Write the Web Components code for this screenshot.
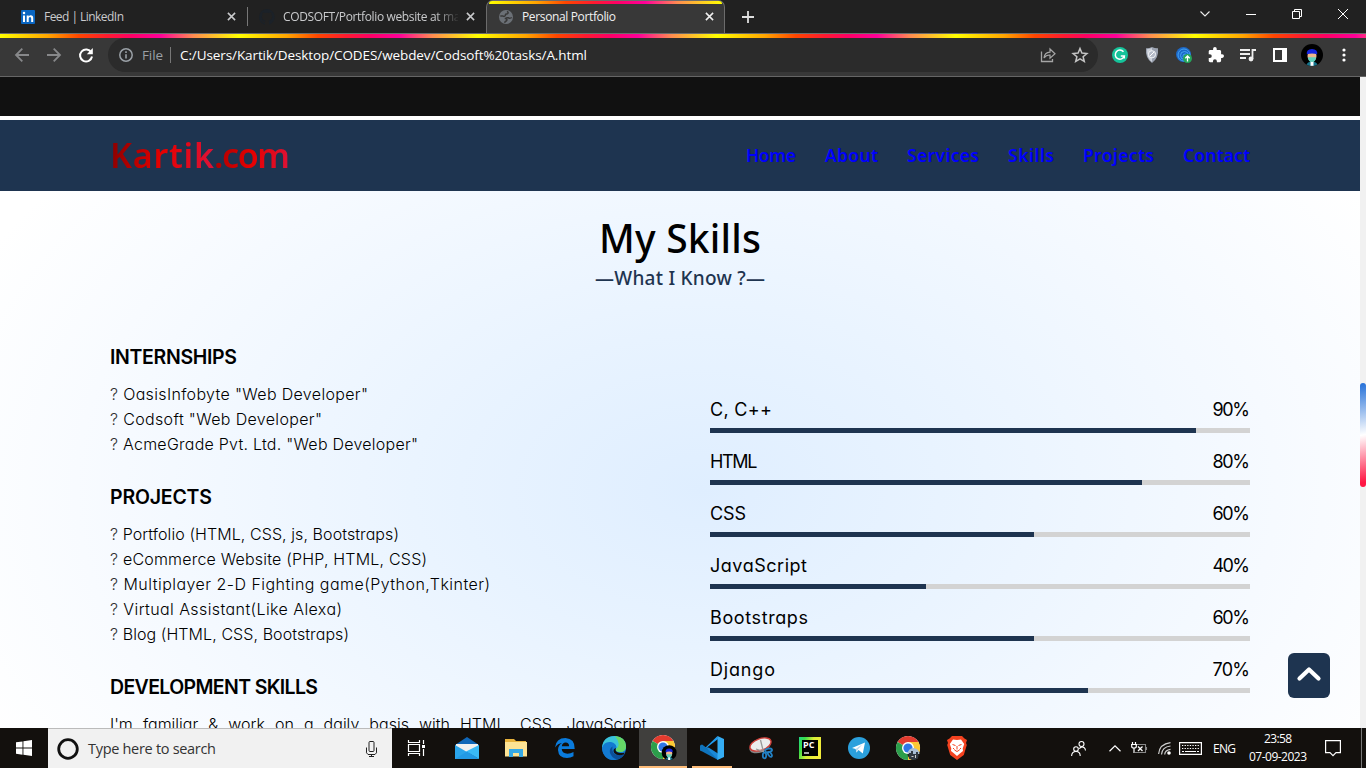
<!DOCTYPE html>
<html lang="en">
<head>
<meta charset="utf-8">
<title>Personal Portfolio</title>
<style>
html,body{margin:0;height:100%;overflow:hidden}
body{font-family:"Open Sans","Noto Sans",sans-serif;background:#fff}
</style>
</head>
<body>
<desktop-screen></desktop-screen>
<script>
const define = (name, html) => {
  const t = document.createElement('template');
  t.innerHTML = html;
  customElements.define(name, class extends HTMLElement {
    constructor() {
      super();
      this.attachShadow({ mode: 'open' }).appendChild(t.content.cloneNode(true));
    }
  });
};

/* ---------- icon set ---------- */
const avatar = '<circle cx="12" cy="12" r="11" fill="#000"/><path d="M6.500 21.500q1.500-3 5.500-3t5.500 3q-5.500 3-11 0z" fill="#16748c"/><path d="M10.500 18h3v4.800h-3z" fill="#fff"/><ellipse cx="12" cy="13" rx="4.500" ry="5.500" fill="#efb58c"/><path d="M8 14.300h8q0 4.700-4 4.700t-4-4.700z" fill="#5fd0bd"/><path d="M6.800 11.300Q6 6.500 12 6q6 .500 5.200 5.300-5.200-1.800-10.400 0z" fill="#1424e0"/>';
const chrome = '<circle cx="12" cy="12" r="12" fill="#fff"/><path d="M12 12L1.600 6A12 12 0 0 1 22.400 6z" fill="#e33b2e"/><path d="M12 12L22.400 6A12 12 0 0 1 12 24z" fill="#fcc934"/><path d="M12 12v12A12 12 0 0 1 1.600 6z" fill="#2c9e4b"/><path d="M12 6h10.400l-5.200 9z" fill="#fcc934"/><path d="M12 24l5.200-9L12 12z" fill="#fcc934"/><circle cx="12" cy="12" r="6" fill="#fff"/><circle cx="12" cy="12" r="4.600" fill="#2f76e6"/>';
const X = '<path d="M1 1l8 8M9 1l-8 8" stroke="currentColor" stroke-width="1.700" fill="none"/>';
const ICONS = {
  linkedin: ['0 0 14 14', '<rect width="14" height="14" rx="1" fill="#0a66c2"/><rect x="2" y="5.500" width="2" height="6.500" fill="#fff"/><circle cx="3" cy="3" r="1.250" fill="#fff"/><path d="M5.700 12V5.500h2v1Q8.500 5.300 9.800 5.300 12.200 5.300 12.200 8v4h-2V8.600q0-1.500-1.200-1.500T7.700 8.600V12z" fill="#fff"/>'],
  github: ['0 0 16 16', '<path fill="#1b2128" d="M8 0a8 8 0 0 0-2.500 15.600c.4.100.5-.2.500-.4v-1.500c-2.200.5-2.700-1-2.700-1-.4-.9-.9-1.200-.9-1.200-.7-.5.100-.5.100-.5.800.1 1.200.8 1.200.8.700 1.200 1.900.9 2.300.7.100-.5.300-.9.500-1.100-1.800-.2-3.600-.9-3.600-4 0-.9.300-1.600.8-2.100-.1-.2-.4-1 .1-2.100 0 0 .7-.2 2.200.8a7.500 7.500 0 0 1 4 0c1.500-1 2.200-.8 2.200-.8.400 1.100.2 1.900.1 2.100.5.600.8 1.300.8 2.100 0 3.100-1.900 3.800-3.700 4 .3.200.6.700.6 1.500v2.200c0 .2.100.5.500.4A8 8 0 0 0 8 0z"/>'],
  globe: ['0 0 14 14', '<circle cx="7" cy="7" r="7" fill="#6b7076"/><path d="M8 1.300Q10 2.500 8.500 3.800 6.300 3.800 6.300 5.500 5.500 7 4 6L1.300 6M12.800 7.500Q11 8.700 9.500 7.800 7 7.500 6.500 8.500 8.800 9.300 7.500 10.800 6 11.500 5.500 12.800" stroke="#383838" stroke-width="1.500" fill="none"/>'],
  x: ['0 0 10 10', X],
  xthin: ['0 0 10 10', '<path d="M0 0l10 10M10 0L0 10" stroke="#fff" fill="none"/>'],
  plus: ['0 0 12 12', '<path d="M6 0v12M0 6h12" stroke="#dedede" stroke-width="1.800"/>'],
  chev: ['0 0 10 6', '<path d="M.500.500L5 5 9.500.500" stroke="#eee" stroke-width="1.100" fill="none"/>'],
  min: ['0 0 10 10', '<path d="M0 5.500h10" stroke="#fff"/>'],
  restore: ['0 0 10 10', '<path d="M.500 2.500h7v7h-7zM2.500 2.500v-2h7v7h-2" stroke="#fff" fill="none"/>'],
  back: ['0 0 14 14', '<path d="M14 7H1.500M7.300.700L1 7l6.300 6.300" stroke="#87888a" stroke-width="1.800" fill="none"/>'],
  fwd: ['0 0 14 14', '<path d="M0 7h12.500M6.700.700L13 7l-6.300 6.300" stroke="#87888a" stroke-width="1.800" fill="none"/>'],
  reload: ['0 0 14 14', '<path d="M12.300 4.500A6 6 0 1 0 13 8.500" stroke="#fff" stroke-width="2" fill="none"/><path d="M13.800 0v6.200H7.800z" fill="#fff"/>'],
  info: ['0 0 14 14', '<circle cx="7" cy="7" r="6.200" stroke="#9aa0a6" stroke-width="1.500" fill="none"/><path d="M7 6.200v4.300M7 3.300v1.600" stroke="#9aa0a6" stroke-width="1.600"/>'],
  share: ['0 0 16 16', '<path d="M1.500 4.500v10h11v-2.500" stroke="#a5a5a5" stroke-width="1.300" fill="none"/><path d="M4 11q.500-5.500 6-5.800V2l5 4.700-5 4.500V8q-4-.100-6 3z" stroke="#a5a5a5" stroke-width="1.200" fill="none"/>'],
  star: ['0 0 16 16', '<path d="M8 1.500l1.900 4.600 5 .4-3.800 3.200 1.200 4.800L8 11.900l-4.300 2.600 1.200-4.800L1.100 6.500l5-.4z" stroke="#c4c4c4" stroke-width="1.500" fill="none"/>'],
  grammarly: ['0 0 16 16', '<circle cx="8" cy="8" r="8" fill="#15c39a"/><path d="M11.500 4.800A4.600 4.600 0 1 0 12.300 9H8.800m3.500 0v2.600" stroke="#fff" stroke-width="1.500" fill="none"/>'],
  shield: ['0 0 16 16', '<path d="M8 0q3 1.500 6 1.300Q15 11 8 16 1 11 2 1.300 5 1.500 8 0z" fill="#9ba2b0"/><path d="M8 1v14Q2.500 11 3 2.200 6 2 8 1z" fill="#cdd2db"/><circle cx="8" cy="7.300" r="3.600" fill="#b4bac7" stroke="#f2f4f7"/><path d="M6 9l4-4" stroke="#fff"/>'],
  ip: ['0 0 16 16', '<circle cx="7.500" cy="7.500" r="7.500" fill="#1c68c9"/><g fill="none" stroke="#48aaf4" stroke-width=".900"><circle cx="8" cy="8" r="6"/><circle cx="8.500" cy="8.500" r="4"/><circle cx="9" cy="9" r="2"/></g><circle cx="11.500" cy="11.500" r="4.500" fill="#25a65b"/><path d="M11.500 14.500v-5M9.300 11.300l2.200-2.300 2.200 2.300" stroke="#fff" stroke-width="1.300" fill="none"/>'],
  puzzle: ['1 1 22 22', '<path fill="#fff" d="M20.500 11H19V7c0-1.100-.9-2-2-2h-4V3.500a2.500 2.500 0 0 0-5 0V5H4c-1.100 0-2 .9-2 2v3.800h1.500a2.700 2.700 0 0 1 0 5.400H2V20c0 1.100.9 2 2 2h3.800v-1.500a2.700 2.700 0 0 1 5.400 0V22H17c1.100 0 2-.9 2-2v-4h1.500a2.500 2.500 0 0 0 0-5z"/>'],
  music: ['0 0 16 14', '<path d="M0 2h10M0 6h10M0 10h6" stroke="#eee" stroke-width="1.800"/><path d="M12.500 11V2H16" stroke="#eee" stroke-width="1.800" fill="none"/><circle cx="11" cy="11" r="2.400" fill="#eee"/>'],
  panel: ['0 0 14 14', '<path d="M1 1h12v12H1z" stroke="#fff" stroke-width="2" fill="none"/><path d="M9 0h5v14H9z" fill="#fff"/>'],
  avatar: ['1 1 22 22', avatar],
  dots: ['0 0 4 14', '<g fill="#fff"><circle cx="2" cy="2" r="1.600"/><circle cx="2" cy="7" r="1.600"/><circle cx="2" cy="12" r="1.600"/></g>'],
  up: ['0 0 24 14', '<path d="M2.500 11.500L12 2.500l9.500 9" stroke="#fff" stroke-width="4.200" stroke-linecap="round" stroke-linejoin="round" fill="none"/>'],
  win: ['0 0 16 16', '<path fill="#fff" d="M0 2.300L6.500 1.400v6.200H0zM7.400 1.200L16 0v7.600H7.400zM0 8.500h6.500v6.200L0 13.800zM7.400 8.500H16V16l-8.600-1.200z"/>'],
  cortana: ['0 0 22 22', '<circle cx="11" cy="11" r="9.300" stroke="#111" stroke-width="2.800" fill="none"/>'],
  mic: ['0 0 11 16', '<rect x="3" y=".500" width="5" height="10" rx="1" stroke="#222" fill="none"/><path d="M.500 6.500v5.300l1.500 1.700h7l1.500-1.700V6.500M5.500 13v2.500M3 15.500h5" stroke="#222" fill="none"/>'],
  taskview: ['0 0 17 16', '<path d="M.500 0v2.500h11V0M.500 4.500h11v7H.500zM.500 16v-2.500h11V16M15.500 0v4M15.500 9v7" stroke="#fff" stroke-width="1.200" fill="none"/><path d="M14 5h3v3h-3z" fill="#fff"/>'],
  mail: ['0 0 24 22', '<path d="M0 8L12 0l12 8v2H0z" fill="#1067b8"/><path d="M1 7h22v9H1z" fill="#f0f0f0"/><path d="M0 8l24 14H0z" fill="#2aa4ea"/><path d="M24 8v14L11 14.500z" fill="#39b9f5"/><path d="M0 22l12-7.500L24 22z" fill="#2299e4"/>'],
  explorer: ['0 0 22 18', '<path d="M0 0h9l2 2h10v15H0z" fill="#e9b33c"/><path d="M0 3h22v14.500H0z" fill="#fde394"/><path d="M4 18v-8h14v8h-4v-4H8v4z" fill="#35a9e6"/>'],
  edge: ['0 0 20 20', '<path fill="#0a7bdc" d="M0 9.500Q1 0 10.500 0 20 .500 19.700 11H6.700q.5 4.600 5.800 4.700 3 0 6-1.700v4.300Q15.500 20 12 20 3.500 20 3 12q0-4.500 4-6.900Q2.800 5.500 0 9.500zM6.800 8.200h7.300Q14 4.500 10.700 4.500T6.800 8.200z"/>'],
  edgenew: ['0 0 24 24', '<circle cx="12" cy="12" r="12" fill="#1378cf"/><path d="M0 12Q1 0 13 0q10.500 1 11 10 0 6-6 6-4.500 0-4.200-3 1.500-3.500-1.800-5.300Q5 5 0 12z" fill="#3bc4d9"/><path d="M13 0q10.500 1 11 10 0 6-6 6-4.500 0-4.200-3Q20 9 13 0z" fill="#66d867"/><path d="M0 12q2-7 9-6 5 1 5.500 6-1.500-2-4-1.500-3.500 2-2.500 6.500 2 5 7 6.500Q2 26 0 12z" fill="#137ad2"/><path d="M10.500 10.500q-3.500 2-2.500 6.500 2 5 7 6.500 5-1 7.500-5.500-7 3-11-1-2-3-1-6.500z" fill="#0b4f99"/><path d="M14 12q-1.500 3 2 4.500 4 1 6.500 0l-.800 2q-6 2-9.500-1.500-2-4 1.800-5z" fill="#13100d"/>'],
  chromeme: ['0 0 26 26', chrome + '<g transform="translate(10 9.500) scale(.68)">' + avatar + '</g>'],
  vscode: ['0 0 24 24', '<path d="M17.500 0L5.500 11.500 2 8.700.300 9.700v4.600l1.700 1 16-12.300z" fill="#1f9cf0"/><path d="M.300 9.500L2 8.500l16 12.400V24L0 14.300z" fill="#0f74bd"/><path d="M5.500 11L18 24V17.500L9 11.700z" fill="#1a88d6"/><path d="M17.500 0L24 3v18l-6.500 3z" fill="#35adf3"/>'],
  snip: ['0 0 24 22', '<ellipse cx="11" cy="9.500" rx="11" ry="6" transform="rotate(-20 11 9.500)" fill="#858585"/><ellipse cx="11.500" cy="7.500" rx="11" ry="5.800" transform="rotate(-20 11.500 7.500)" fill="#ececec" stroke="#cf3d37" stroke-width="1.400"/><path d="M11.500 3l3 12M7 12l8 3" stroke="#999" stroke-width="1.300"/><g fill="none" stroke="#2281c4" stroke-width="1.800"><ellipse cx="19.500" cy="13.500" rx="3.500" ry="1.700" transform="rotate(-12 19 13)"/><ellipse cx="15.500" cy="18.500" rx="1.700" ry="2.800"/><ellipse cx="20.500" cy="17.800" rx="1.500" ry="2.800" transform="rotate(-35 20 17)"/></g>'],
  pycharm: ['0 0 22 22', '<defs><linearGradient id="g" x2="1" y2=".4"><stop stop-color="#21d789"/><stop offset=".25" stop-color="#39dd4a"/><stop offset=".6" stop-color="#d9ee35"/><stop offset="1" stop-color="#f2ec3b"/></linearGradient></defs><rect width="22" height="22" fill="url(#g)"/><rect x="3" y="3" width="16" height="16" fill="#000"/><text x="4" y="11.300" font-family="Open Sans,sans-serif" font-weight="700" font-size="9" fill="#fff">PC</text><path d="M5 16h5" stroke="#fff" stroke-width="1.300"/>'],
  telegram: ['0 0 22 22', '<circle cx="11" cy="11" r="11" fill="#2ba0dc"/><path d="M4 11L17 5.500l-2.200 11L10.500 13l-2 2.500-.800-3.500z" fill="#fff"/><path d="M7.700 12l6.800-4.700-4.500 5-1.500 3.200z" fill="#b9d9ee"/>'],
  chromedark: ['0 0 24 24', chrome + '<clipPath id="c"><circle cx="17.500" cy="18" r="6"/></clipPath><g clip-path="url(#c)"><path d="M11 12h13v6H11z" fill="#a9bed3"/><path d="M11 18h13v6H11z" fill="#222"/><path d="M13 24v-7h2v-2h2v3h3v-2h2v8z" fill="#303940"/><path d="M15.500 20h2v1h-2zM19 19h1v3h-1z" fill="#ccc"/></g>'],
  brave: ['0 0 20 24', '<path d="M5 0h10l2.500 2.500L20 4l-1 3 .8 2-3 10L10 24l-6.800-5-3-10L1 7 0 4l2.500-1.500z" fill="#f4421f"/><path d="M10 4l4-.5 3.200 4.500-1.500 4.500.300 2.500-2.500 2-3.500 3-3.500-3L4 15l.300-2.500L2.800 8 6 3.500z" fill="#fff"/><path d="M5.500 8.500l3 1M14.500 8.500l-3 1M10 10v3.500M7.500 14l2.500 1.500 2.500-1.500M6 12l1.500 1.500M14 12l-1.500 1.500" stroke="#f4421f" stroke-width="1" fill="none"/>'],
  people: ['0 0 15 15', '<g stroke="#fff" stroke-width="1.100" fill="none"><circle cx="5" cy="8" r="2.300"/><path d="M.600 15q.200-4.500 4.400-4.500T9.200 15"/><circle cx="10.500" cy="3" r="2.500"/><path d="M8.300 7.700q2-2.800 4.700-1.200 1.400 1 1.500 3"/></g>'],
  chevup: ['0 0 12 7', '<path d="M.500 6.200L6 .900l5.500 5.300" stroke="#fff" stroke-width="1.200" fill="none"/>'],
  battery: ['0 0 16 12', '<path d="M6 2.500h8.500v8H4M15.500 5v3" stroke="#888" stroke-width="1.100" fill="none"/><path d="M1.500 0v2M4.500 0v2M0 2.500h6M.700 2.500v2q0 1.500 2.300 1.500t2.300-1.500v-2M3 6v5" stroke="#fff" stroke-width="1.200" fill="none"/><path d="M7 4.500l4.500 4.500M11.500 4.500L7 9" stroke="#fff" stroke-width="1.300"/>'],
  wifi: ['0 0 13 13', '<g fill="none" stroke="#cfcfcf" stroke-width="1.200"><path d="M.600 12Q1.500 2 12.500.700M3.500 12.500Q4 5 12.500 4M6.700 12.500Q7 8 12.500 7.300"/></g><circle cx="11" cy="11" r="1.800" fill="#fff"/>'],
  keyboard: ['0 0 23 13', '<path d="M.600.600h21.800v11.800H.600z" stroke="#fff" stroke-width="1.200" fill="none"/><path d="M3 3.500h17M3 6.500h17" stroke="#fff" stroke-width="1.200" stroke-dasharray="1.300 1.300"/><path d="M3 9.500h2M6 9.500h11M18 9.500h2" stroke="#fff" stroke-width="1.200"/>'],
  note: ['0 0 16 16', '<path d="M.600.600h14.800v12H11l-3 3-3-3H.600z" stroke="#fff" stroke-width="1.200" fill="none"/>']
};
customElements.define('ui-icon', class extends HTMLElement {
  connectedCallback() {
    if (this.shadowRoot) return;
    const [box, body] = ICONS[this.getAttribute('name')];
    const w = this.getAttribute('w'), h = this.getAttribute('h') || w;
    this.attachShadow({ mode: 'open' }).innerHTML =
      `<style>:host{display:inline-flex;flex:none}svg{display:block;overflow:visible}</style><svg width="${w}" height="${h}" viewBox="${box}">${body}</svg>`;
  }
});

/* ---------- browser chrome ---------- */
define('browser-tab', `<style>
:host{display:flex;align-items:center;box-sizing:border-box;height:33px;width:239px;padding:0 11px 0 21px;font-size:12px;color:#c9cacc}
.t{flex:1;overflow:hidden;white-space:nowrap;margin:0 14px 0 0}
.i{width:23px;display:flex}
:host([fade]) .i{width:24px}
:host([fade]) .t{-webkit-mask-image:linear-gradient(90deg,#000 152px,transparent 177px);margin-right:8px}
:host([active]){color:#f1f1f1;background:#383838;border:1px solid #6c6c6c;border-bottom:0;border-radius:7px 7px 0 0;padding:0 10px 1px 12px;position:relative}
:host([active])::before{content:"";position:absolute;left:2px;right:2px;top:0;height:3px;border-radius:5px 5px 0 0;background:var(--rainbow)}
</style><span class="i"><slot name="icon"></slot></span><span class="t"><slot></slot></span><ui-icon name="x" w="9"></ui-icon>`);

define('tab-strip', `<style>
:host{display:flex;height:33px;background:#212121;align-items:flex-start}
.sep{width:1px;height:19px;background:#777;margin-top:7px}
.first{width:247px;padding-right:11px}
.second{width:238px;padding-left:11px;padding-right:11px}
.plus{margin:11px 0 0 17px}
.win{display:flex;margin-left:auto}
.win span{width:46px;height:28px;display:flex;align-items:center;justify-content:center}
</style>
<browser-tab class="first"><ui-icon slot="icon" name="linkedin" w="14"></ui-icon><fit-text w="80">Feed | LinkedIn</fit-text></browser-tab><span class="sep"></span>
<browser-tab fade class="second"><ui-icon slot="icon" name="github" w="16"></ui-icon><fit-text w="187">CODSOFT/Portfolio website at main</fit-text></browser-tab>
<browser-tab active><ui-icon slot="icon" name="globe" w="14"></ui-icon><fit-text w="94">Personal Portfolio</fit-text></browser-tab>
<ui-icon class="plus" name="plus" w="12"></ui-icon>
<div class="win"><span><ui-icon name="chev" w="10" h="6"></ui-icon></span><span><ui-icon name="min" w="10"></ui-icon></span><span><ui-icon name="restore" w="10"></ui-icon></span><span><ui-icon name="xthin" w="10"></ui-icon></span></div>`);

define('tool-bar', `<style>
:host{display:flex;height:44px;box-sizing:border-box;background:#383838;border-top:1px solid #6c6c6c;border-bottom:1px solid #666;flex-wrap:wrap;align-content:flex-start}
.strip{width:100%;height:4px;background:var(--rainbow) 0 0/239px 100%}
.nav{display:flex;width:108px;height:34px;align-items:center;padding-left:6px;box-sizing:border-box}
.nav ui-icon{width:32px;justify-content:center}
.omni{display:flex;align-items:center;width:990px;height:34px;background:#2b2b2b;border-radius:17px;box-sizing:border-box;padding:0 2px 0 11px;font-size:13.500px;color:#9aa0a6}
.file{margin:0 0 0 9px}.bar{width:1px;height:16px;background:#777;margin:0 9px 0 7px}
.url{color:#fff;flex:1}
.c{width:32px;height:34px;display:flex;align-items:center;justify-content:center}
.ext{display:flex;margin-left:6px}
</style>
<div class="strip"></div>
<div class="nav"><ui-icon name="back" w="14"></ui-icon><ui-icon name="fwd" w="14"></ui-icon><ui-icon name="reload" w="14"></ui-icon></div>
<div class="omni"><ui-icon name="info" w="14"></ui-icon><span class="file"><fit-text w="21">File</fit-text></span><span class="bar"></span><span class="url"><fit-text w="407">C:/Users/Kartik/Desktop/CODES/webdev/Codsoft%20tasks/A.html</fit-text></span><span class="c"><ui-icon name="share" w="16"></ui-icon></span><span class="c"><ui-icon name="star" w="16"></ui-icon></span></div>
<div class="ext"><span class="c"><ui-icon name="grammarly" w="16"></ui-icon></span><span class="c"><ui-icon name="shield" w="16"></ui-icon></span><span class="c"><ui-icon name="ip" w="16"></ui-icon></span><span class="c"><ui-icon name="puzzle" w="16"></ui-icon></span><span class="c"><ui-icon name="music" w="16" h="14"></ui-icon></span><span class="c"><ui-icon name="panel" w="14"></ui-icon></span><span class="c"><ui-icon name="avatar" w="22"></ui-icon></span><span class="c"><ui-icon name="dots" w="4" h="14"></ui-icon></span></div>`);

/* ---------- portfolio page ---------- */
define('site-header', `<style>
:host{display:flex;align-items:center;justify-content:space-between;height:71px;box-sizing:border-box;padding:0 110px 2px;background:#1e3450;font-family:"Noto Sans","Open Sans",sans-serif}
.logo{font-size:34px;font-weight:650;line-height:50px;display:flex}
.logo fit-text{background:linear-gradient(100deg,#850000,#e60000 50%,#dc143c);-webkit-background-clip:text;background-clip:text;color:transparent}
.logo .b{background-image:linear-gradient(100deg,#a30000,#e60000 50%,#dc143c)}
nav{display:flex;gap:29px;font-size:17.500px;font-weight:600;color:#0000fe;line-height:30px}
</style>
<div class="logo"><fit-text w="104">Kartik</fit-text><fit-text class="b" w="76">.com</fit-text></div>
<nav><fit-text w="50">Home</fit-text><fit-text w="53">About</fit-text><fit-text w="72">Services</fit-text><fit-text w="46">Skills</fit-text><fit-text w="71">Projects</fit-text><fit-text w="67">Contact</fit-text></nav>`);

define('section-title', `<style>
:host{display:flex;flex-direction:column;align-items:center;font-family:"Noto Sans","Open Sans",sans-serif;font-weight:500}
.h{font-size:39px;line-height:50px;color:#000}
.s{font-size:19px;line-height:30px;color:#1e3450}
</style><div class="h"><slot></slot></div><div class="s"><slot name="sub"></slot></div>`);

define('info-group', `<style>
:host{display:block;margin-bottom:25px}
.h{font-size:19.500px;font-weight:600;line-height:30px;margin-bottom:10px}
.l{display:flex;flex-direction:column;font-size:16px;line-height:25px;font-weight:350}
</style><div class="h"><slot name="head"></slot></div><div class="l"><slot></slot></div>`);

customElements.define('skill-bar', class extends HTMLElement {
  connectedCallback() {
    if (this.shadowRoot) return;
    const v = this.getAttribute('value');
    this.attachShadow({ mode: 'open' }).innerHTML = `<style>
:host{display:block;height:52px}
.r{display:flex;justify-content:space-between;line-height:28px;font-size:18px;margin-bottom:4px}
.b{height:5px;background:#d3d3d3}.f{height:5px;width:${v}%;background:#1e3450}
</style><div class="r"><slot></slot><fit-text w="37.5">${v}%</fit-text></div><div class="b"><div class="f"></div></div>`;
  }
});

define('portfolio-page', `<style>
:host{display:flex;height:651px;overflow:hidden}
main{width:1360px;height:651px;position:relative;overflow:hidden}
.black{height:39px;background:#111;border-bottom:4px solid #fff}
section{height:537px;box-sizing:border-box;padding:22px 110px 0;font-family:Inter,"Open Sans",sans-serif;font-feature-settings:"cv11";color:#000;background:radial-gradient(ellipse 800px 520px at 700px 299px,#dfeeff 0%,#e8f3ff 30%,#f0f7ff 54%,#f8fbff 78%,#fff 100%)}
.cols{display:flex;justify-content:space-between;margin-top:49px}
.left{width:540px}.right{width:540px;padding-top:54px}
.top{position:absolute;left:1288px;top:576px;width:42px;height:45px;border-radius:6px;background:#1e3450;display:flex;align-items:center;justify-content:center;box-sizing:border-box;padding-bottom:3px}
.scroll{width:6px;background:#f1f1f1;padding-top:306px;box-sizing:border-box}
.thumb{height:104px;border-radius:3px;background:linear-gradient(170deg,#2470d8,#fff 50%,#ff1744 95%)}
.q{color:#333;font-weight:300}
</style>
<main>
<div class="black"></div>
<site-header></site-header>
<section>
<section-title><fit-text w="162">My Skills</fit-text><fit-text slot="sub" w="170">—What I Know ?—</fit-text></section-title>
<div class="cols">
<div class="left">
<info-group><fit-text slot="head" w="127">INTERNSHIPS</fit-text>
<fit-text w="258"><span class="q">?</span> OasisInfobyte "Web Developer"</fit-text>
<fit-text w="212"><span class="q">?</span> Codsoft "Web Developer"</fit-text>
<fit-text w="308"><span class="q">?</span> AcmeGrade Pvt. Ltd. "Web Developer"</fit-text></info-group>
<info-group><fit-text slot="head" w="102">PROJECTS</fit-text>
<fit-text w="289"><span class="q">?</span> Portfolio (HTML, CSS, js, Bootstraps)</fit-text>
<fit-text w="317"><span class="q">?</span> eCommerce Website (PHP, HTML, CSS)</fit-text>
<fit-text w="380"><span class="q">?</span> Multiplayer 2-D Fighting game(Python,Tkinter)</fit-text>
<fit-text w="232"><span class="q">?</span> Virtual Assistant(Like Alexa)</fit-text>
<fit-text w="239"><span class="q">?</span> Blog (HTML, CSS, Bootstraps)</fit-text></info-group>
<info-group><fit-text slot="head" w="208">DEVELOPMENT SKILLS</fit-text>
<fit-text w="541" words>I'm familiar &amp; work on a daily basis with HTML, CSS, JavaScript,</fit-text></info-group>
</div>
<div class="right">
<skill-bar value="90"><fit-text w="62">C, C++</fit-text></skill-bar>
<skill-bar value="80"><fit-text w="47.500">HTML</fit-text></skill-bar>
<skill-bar value="60"><fit-text w="36">CSS</fit-text></skill-bar>
<skill-bar value="40"><fit-text w="97">JavaScript</fit-text></skill-bar>
<skill-bar value="60"><fit-text w="98">Bootstraps</fit-text></skill-bar>
<skill-bar value="70"><fit-text w="65">Django</fit-text></skill-bar>
</div>
</div>
</section>
<div class="top"><ui-icon name="up" w="24" h="14"></ui-icon></div>
</main>
<div class="scroll"><div class="thumb"></div></div>`);

/* ---------- taskbar ---------- */
define('task-bar', `<style>
:host{display:flex;height:40px;background:#13100d;color:#fff}
.c{height:40px;display:flex;align-items:center;justify-content:center;box-sizing:border-box;flex:none}
.start{width:48px}
.search{width:344px;background:#f1f1f1;border-top:1px solid #bbb;box-sizing:border-box;display:flex;align-items:center;padding:0 15px 0 9px;color:#333;font-size:14.500px}
.search fit-text{margin-left:9px}.search .m{margin-left:auto}
.tv{width:50px;padding-right:2px}
.apps{display:flex}.apps .c{width:49px}
.apps .on{width:48px;background:#403f3d;border-bottom:2px solid #fdbc79;margin:0 0 0 1px;padding:2px 0 0 2px}
.apps .run{background:linear-gradient(#fdbc79,#fdbc79) 5px 38px/40px 2px no-repeat}
.tray{display:flex;margin-left:auto;font-size:12px}
.clock{flex-direction:column;line-height:18px}
.end{width:4px;border-left:1px solid #777}
</style>
<div class="c start"><ui-icon name="win" w="16"></ui-icon></div>
<div class="search"><ui-icon name="cortana" w="22"></ui-icon><fit-text w="128">Type here to search</fit-text><ui-icon class="m" name="mic" w="11" h="16"></ui-icon></div>
<div class="c tv"><ui-icon name="taskview" w="17" h="16"></ui-icon></div>
<div class="apps">
<div class="c"><ui-icon name="mail" w="24" h="22"></ui-icon></div>
<div class="c"><ui-icon name="explorer" w="22" h="18"></ui-icon></div>
<div class="c"><ui-icon name="edge" w="20"></ui-icon></div>
<div class="c"><ui-icon name="edgenew" w="24"></ui-icon></div>
<div class="c on"><ui-icon name="chromeme" w="26"></ui-icon></div>
<div class="c run"><ui-icon name="vscode" w="24"></ui-icon></div>
<div class="c"><ui-icon name="snip" w="24" h="22"></ui-icon></div>
<div class="c"><ui-icon name="pycharm" w="22"></ui-icon></div>
<div class="c"><ui-icon name="telegram" w="22"></ui-icon></div>
<div class="c"><ui-icon name="chromedark" w="24"></ui-icon></div>
<div class="c"><ui-icon name="brave" w="20" h="24"></ui-icon></div>
</div>
<div class="tray">
<div class="c" style="width:36px;margin-right:6px;padding-right:1px"><ui-icon name="people" w="15"></ui-icon></div>
<div class="c" style="width:24px"><ui-icon name="chevup" w="12" h="7"></ui-icon></div>
<div class="c" style="width:24px"><ui-icon name="battery" w="16" h="12"></ui-icon></div>
<div class="c" style="width:26px"><ui-icon name="wifi" w="13"></ui-icon></div>
<div class="c" style="width:26px"><ui-icon name="keyboard" w="23" h="13"></ui-icon></div>
<div class="c" style="width:43px"><fit-text w="23">ENG</fit-text></div>
<div class="c clock" style="width:64px"><fit-text w="28">23:58</fit-text><fit-text w="58">07-09-2023</fit-text></div>
<div class="c" style="width:46px;margin-right:5px"><ui-icon name="note" w="16"></ui-icon></div>
<div class="end"></div>
</div>`);

define('desktop-screen', `<style>
:host{display:flex;flex-direction:column;width:1366px;height:768px;overflow:hidden;
--rainbow:linear-gradient(90deg,#ff0 0%,#ffa500 20%,#ff4500 33%,#ff1a30 45%,#f06 55%,#f09 67%,#ff8c50 81%,#ff0 100%)}
</style><tab-strip></tab-strip><tool-bar></tool-bar><portfolio-page></portfolio-page><task-bar></task-bar>`);

/* Sets a run of text to a given advance width by adjusting its tracking. */
customElements.define('fit-text', class extends HTMLElement {
  connectedCallback() {
    if (this.shadowRoot) return;
    this.attachShadow({ mode: 'open' }).innerHTML =
      '<style>:host{display:inline-block;white-space:pre}span{display:inline-block}</style><span><slot></slot></span>';
    const w = +this.getAttribute('w'), s = this.shadowRoot.querySelector('span');
    const now = s.getBoundingClientRect().width, txt = this.textContent;
    if (this.hasAttribute('words')) s.style.wordSpacing = (w - now) / (txt.split(' ').length - 1) + 'px';
    else s.style.letterSpacing = (w - now) / (txt.length - 1) + 'px';
    this.style.width = w + 'px';
  }
});
</script>
</body>
</html>
